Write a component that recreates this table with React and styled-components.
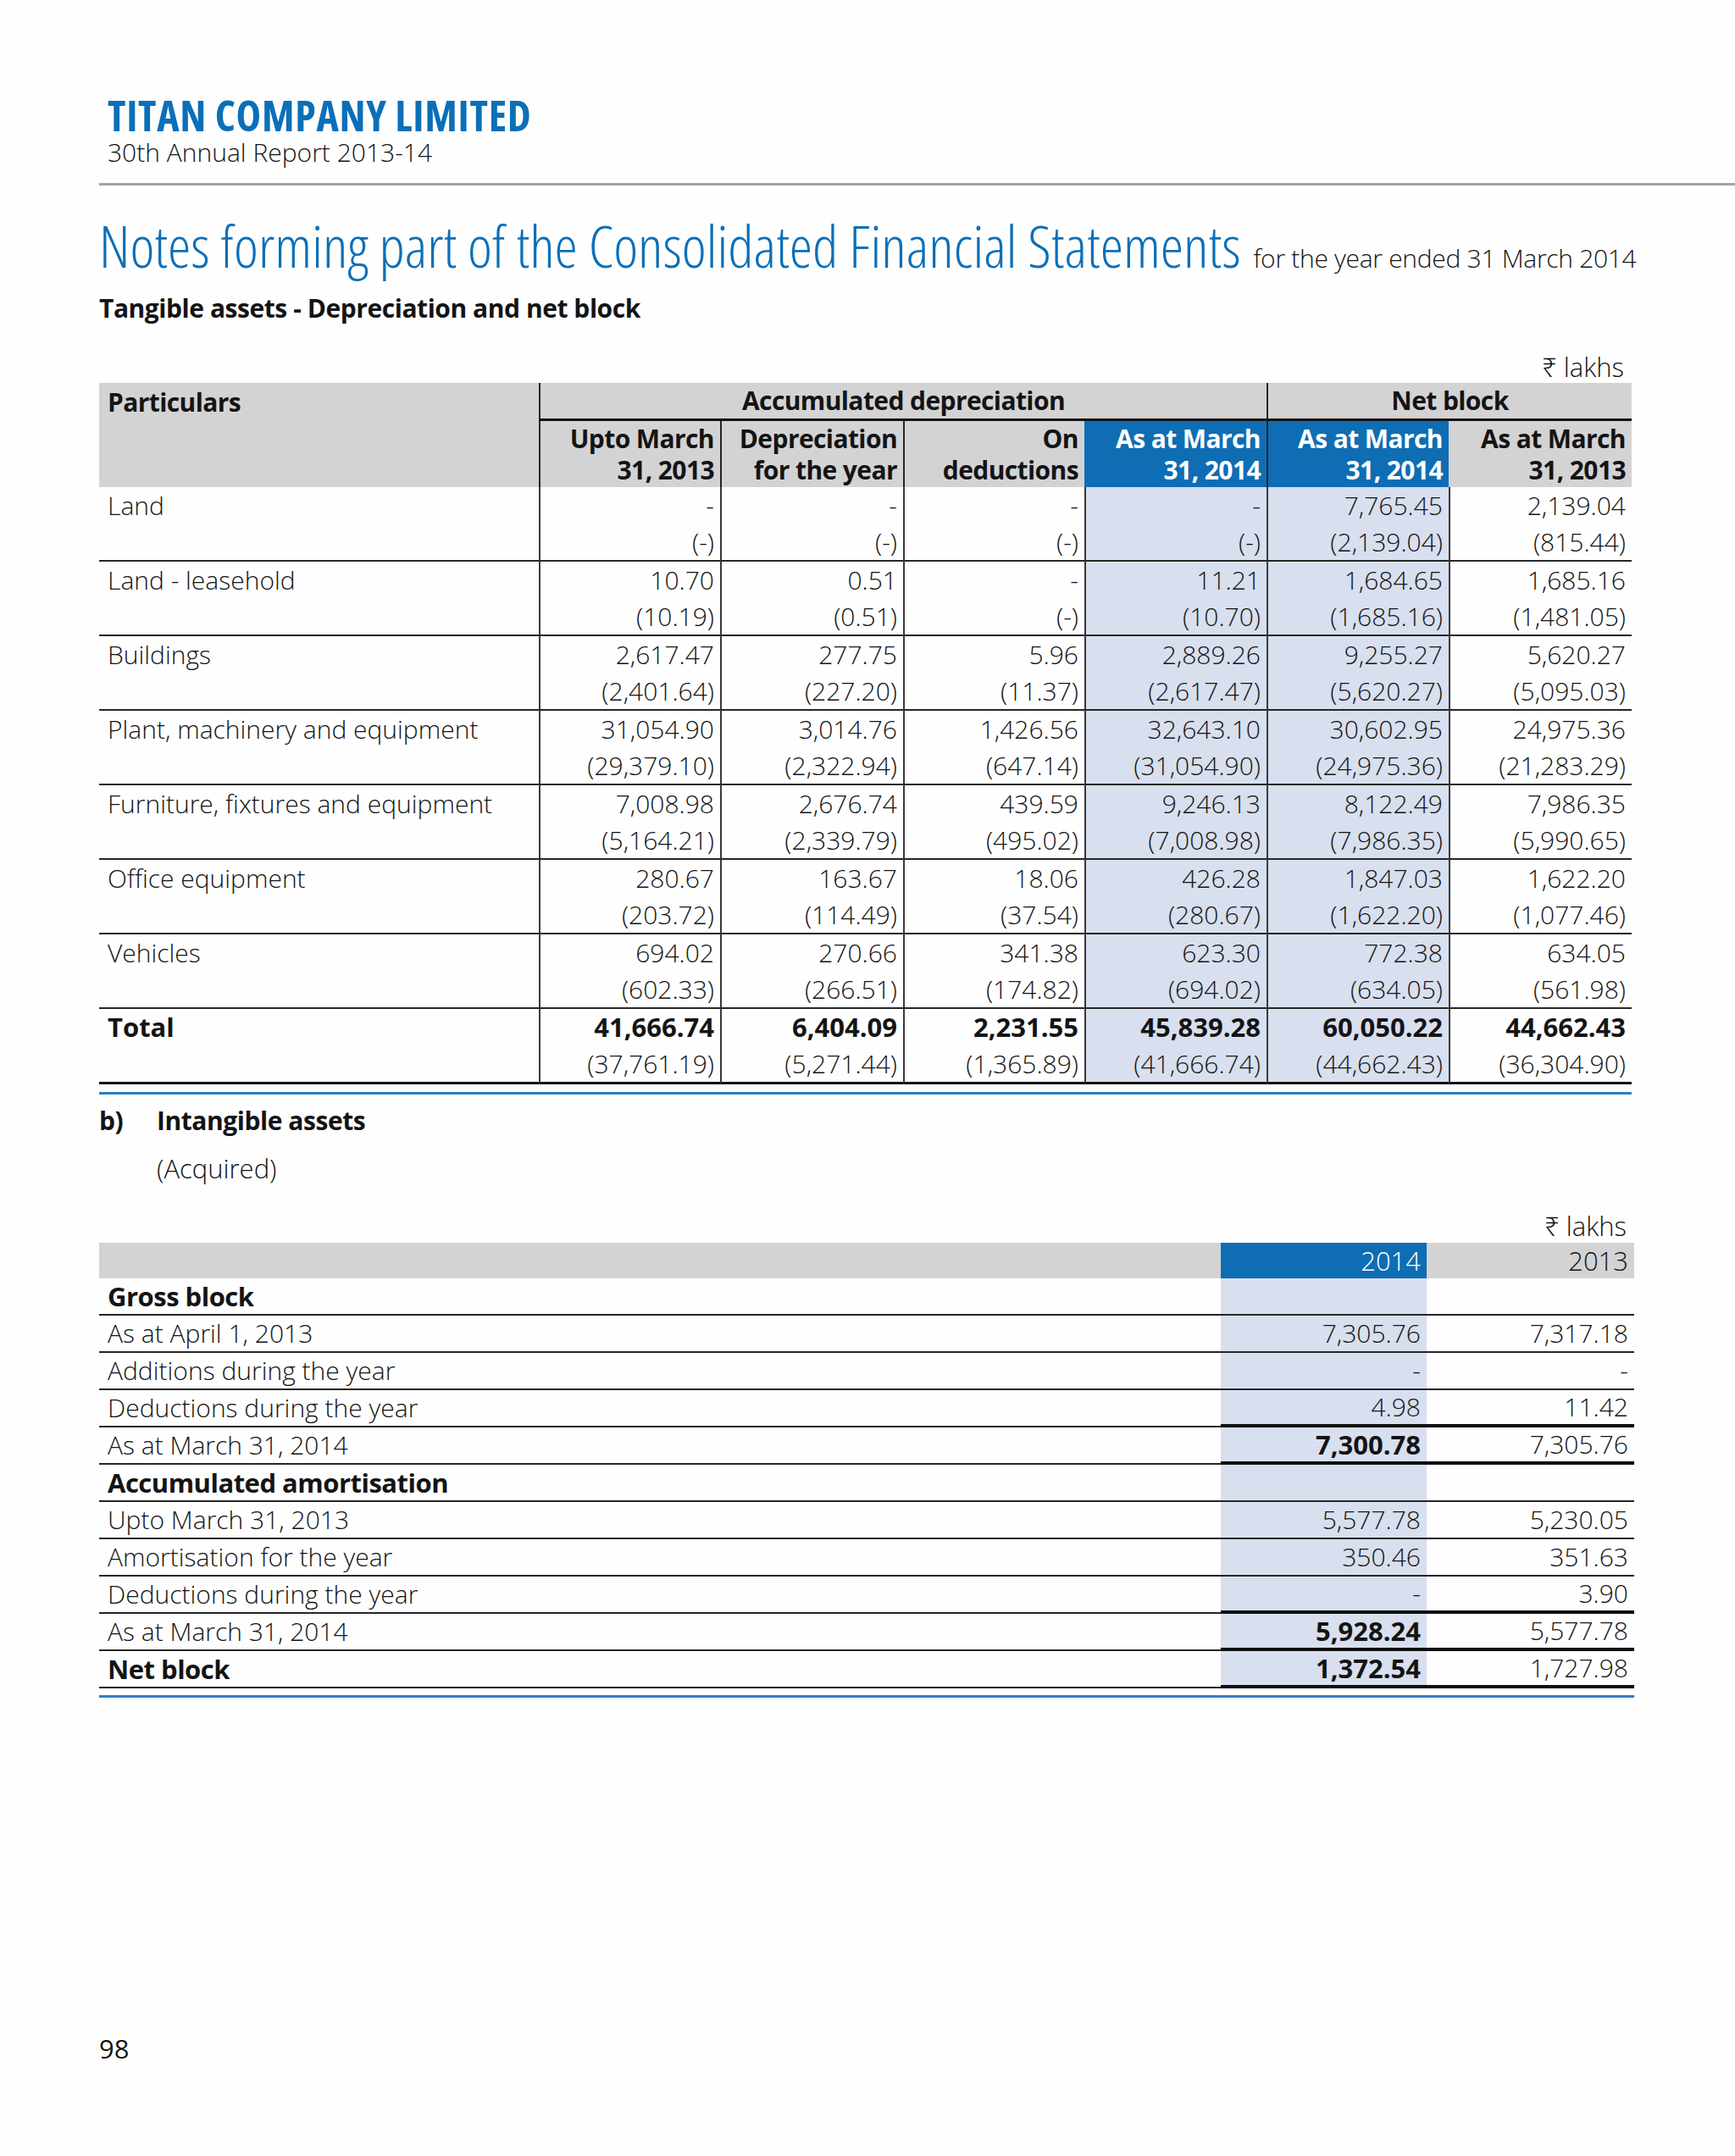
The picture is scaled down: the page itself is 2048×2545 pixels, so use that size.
import React from "react";
import styled, { createGlobalStyle, css } from "styled-components";

const BLUE = "#0b6fb8";
const CELL_BLUE = "#0f6db4";
const LIGHT_BLUE = "#d8dfee";
const GRAY = "#d3d3d4";
const INK = "#141414";
const LINE = "#262626";
const COND = "75%";

const GlobalStyle = createGlobalStyle`
  html, body { margin: 0; padding: 0; background: #fefefe; }
  body {
    font-family: "Open Sans", "Noto Sans", sans-serif;
    font-stretch: 100%;
    color: ${INK};
  }
`;

const Page = styled.div`
  width: 2048px;
  min-height: 2545px;
  box-sizing: border-box;
  padding-top: 110px;
  display: flex;
  flex-direction: column;
`;

/* ---------- Masthead ---------- */
const Masthead = styled.header`
  padding-left: 127px;
`;
const Company = styled.div`
  font-size: 50px;
  line-height: 52px;
  font-weight: 700;
  font-stretch: ${COND};
  letter-spacing: 0.7px;
  color: ${BLUE};
`;
const Edition = styled.div`
  margin-top: 2px;
  font-size: 30px;
  line-height: 32px;
  font-weight: 300;
`;
const Rule = styled.div`
  margin: 20px 0 0 117px;
  height: 3px;
  background: #a3a3a3;
`;

/* ---------- Content ---------- */
const Content = styled.main`
  padding-left: 117px;
  width: 1812px;
  display: flex;
  flex-direction: column;
`;
const TitleRow = styled.div`
  margin-top: 36px;
  display: flex;
  align-items: baseline;
  gap: 15px;
  white-space: nowrap;
`;
const Title = styled.h1`
  margin: 0;
  font-size: 69px;
  line-height: 1;
  font-weight: 300;
  font-stretch: ${COND};
  color: ${BLUE};
`;
const TitleNote = styled.span`
  font-size: 30px;
  font-weight: 300;
  letter-spacing: -0.3px;
`;
const SectionHead = styled.h2`
  margin: ${(p) => p.$top}px 0 0;
  display: flex;
  gap: ${(p) => (p.$label ? 30 : 0)}px;
  font-size: 30px;
  line-height: 38px;
  font-weight: 700;
  letter-spacing: -0.45px;
`;
const Marker = styled.span`
  width: 38px;
`;
const SubNote = styled.div`
  margin: 19px 0 0 68px;
  font-size: 31px;
  line-height: 1.2;
  font-weight: 300;
`;
const Unit = styled.div`
  margin-top: ${(p) => p.$top}px;
  width: ${(p) => p.$width}px;
  padding-right: ${(p) => p.$pad}px;
  box-sizing: border-box;
  text-align: right;
  font-size: 31px;
  line-height: 1.2;
  font-weight: 300;
`;

/* ---------- Depreciation table ---------- */
const DepGrid = styled.div`
  display: grid;
  grid-template-columns: 519px 214px 216px 214px 215px 215px 216px;
  width: 1809px;
`;

const Head = styled.div`
  box-sizing: border-box;
  background: ${(p) => (p.$blue ? CELL_BLUE : GRAY)};
  color: ${(p) => (p.$blue ? "#fff" : INK)};
  font-size: 30px;
  font-weight: 700;
  letter-spacing: -0.6px;
  ${(p) => p.$left && css`border-left: 2px solid ${LINE};`}
`;
const TopHead = styled(Head)`
  grid-column: ${(p) => p.$col};
  height: 45px;
  line-height: 42px;
  text-align: center;
  border-bottom: 3px solid #111;
`;
const ParticularsHead = styled(Head)`
  grid-row: 1 / span 2;
  padding-left: 10px;
  line-height: 45px;
`;
const SubHead = styled(Head)`
  height: 78px;
  padding: 2px 7px 0 0;
  text-align: right;
  line-height: 37px;
`;

const Cell = styled.div`
  box-sizing: border-box;
  height: ${(p) => (p.$first ? 86 : p.$last ? 91 : 88)}px;
  display: flex;
  flex-direction: column;
  align-items: ${(p) => (p.$label ? "flex-start" : "flex-end")};
  padding: 0 ${(p) => (p.$label ? "0 0 10px" : "7px 0 0")};
  font-size: 30px;
  line-height: 43px;
  font-weight: 300;
  background: ${(p) => (p.$tint ? LIGHT_BLUE : "transparent")};
  border-top: ${(p) => (p.$first ? "none" : `2px solid ${LINE}`)};
  border-bottom: ${(p) => (p.$last ? "3px solid #111" : "none")};
  border-left: ${(p) => (p.$label ? "none" : `2px solid #3a3a3a`)};
`;
const Strong = styled.span`
  font-weight: ${(p) => (p.$bold ? 700 : 300)};
  font-size: ${(p) => (p.$bold ? 31 : 30)}px;
`;

const BlueRule = styled.div`
  margin-top: ${(p) => p.$top}px;
  width: ${(p) => p.$width}px;
  height: 3px;
  background: #2e7fc1;
`;

/* ---------- Intangible table ---------- */
const AmortGrid = styled.div`
  display: grid;
  grid-template-columns: 1324px 243px 245px;
  width: 1812px;
`;
const YearHead = styled.div`
  box-sizing: border-box;
  height: 42px;
  line-height: 42px;
  padding-right: 7px;
  text-align: right;
  background: ${(p) => (p.$blue ? CELL_BLUE : GRAY)};
  color: ${(p) => (p.$blue ? "#fff" : INK)};
  font-size: 31px;
  font-weight: 300;
`;
const Line = styled.div`
  box-sizing: border-box;
  height: 44px;
  display: flex;
  align-items: center;
  justify-content: ${(p) => (p.$label ? "flex-start" : "flex-end")};
  padding: ${(p) => (p.$label ? "0 0 0 10px" : "0 7px 0 0")};
  background: ${(p) => (p.$tint ? LIGHT_BLUE : "transparent")};
  border-bottom: ${(p) => (p.$heavy && !p.$label ? "4px solid #0e0e0e" : `2px solid ${LINE}`)};
  font-size: ${(p) => (p.$bold ? 31 : 30)}px;
  font-weight: ${(p) => (p.$bold ? 700 : 300)};
  letter-spacing: ${(p) => (p.$bold && p.$label ? "-0.5px" : "0")};
  white-space: nowrap;
`;

const Folio = styled.footer`
  margin-top: auto;
  padding: 0 0 108px 117px;
  font-size: 31px;
  line-height: 1.2;
  font-weight: 400;
`;

/* ---------- Data ---------- */
const assets = [
  ["Land", ["-", "-", "-", "-", "7,765.45", "2,139.04"], ["(-)", "(-)", "(-)", "(-)", "(2,139.04)", "(815.44)"]],
  ["Land - leasehold", ["10.70", "0.51", "-", "11.21", "1,684.65", "1,685.16"], ["(10.19)", "(0.51)", "(-)", "(10.70)", "(1,685.16)", "(1,481.05)"]],
  ["Buildings", ["2,617.47", "277.75", "5.96", "2,889.26", "9,255.27", "5,620.27"], ["(2,401.64)", "(227.20)", "(11.37)", "(2,617.47)", "(5,620.27)", "(5,095.03)"]],
  ["Plant, machinery and equipment", ["31,054.90", "3,014.76", "1,426.56", "32,643.10", "30,602.95", "24,975.36"], ["(29,379.10)", "(2,322.94)", "(647.14)", "(31,054.90)", "(24,975.36)", "(21,283.29)"]],
  ["Furniture, fixtures and equipment", ["7,008.98", "2,676.74", "439.59", "9,246.13", "8,122.49", "7,986.35"], ["(5,164.21)", "(2,339.79)", "(495.02)", "(7,008.98)", "(7,986.35)", "(5,990.65)"]],
  ["Office equipment", ["280.67", "163.67", "18.06", "426.28", "1,847.03", "1,622.20"], ["(203.72)", "(114.49)", "(37.54)", "(280.67)", "(1,622.20)", "(1,077.46)"]],
  ["Vehicles", ["694.02", "270.66", "341.38", "623.30", "772.38", "634.05"], ["(602.33)", "(266.51)", "(174.82)", "(694.02)", "(634.05)", "(561.98)"]],
  ["Total", ["41,666.74", "6,404.09", "2,231.55", "45,839.28", "60,050.22", "44,662.43"], ["(37,761.19)", "(5,271.44)", "(1,365.89)", "(41,666.74)", "(44,662.43)", "(36,304.90)"], true],
];

const subHeads = [
  ["Upto March", "31, 2013", false, true],
  ["Depreciation", "for the year", false, true],
  ["On", "deductions", false, true],
  ["As at March", "31, 2014", true, false],
  ["As at March", "31, 2014", true, true],
  ["As at March", "31, 2013", false, false],
];

const amort = [
  ["Gross block", "", "", { bold: true }],
  ["As at April 1, 2013", "7,305.76", "7,317.18", {}],
  ["Additions during the year", "-", "-", {}],
  ["Deductions during the year", "4.98", "11.42", { heavy: true }],
  ["As at March 31, 2014", "7,300.78", "7,305.76", { heavy: true, boldNow: true }],
  ["Accumulated amortisation", "", "", { bold: true }],
  ["Upto March 31, 2013", "5,577.78", "5,230.05", {}],
  ["Amortisation for the year", "350.46", "351.63", {}],
  ["Deductions during the year", "-", "3.90", { heavy: true }],
  ["As at March 31, 2014", "5,928.24", "5,577.78", { heavy: true, boldNow: true }],
  ["Net block", "1,372.54", "1,727.98", { heavy: true, bold: true, boldNow: true }],
];

export default function App() {
  return (
    <Page>
      <GlobalStyle />
      <Masthead>
        <Company>TITAN COMPANY LIMITED</Company>
        <Edition>30th Annual Report 2013-14</Edition>
      </Masthead>
      <Rule />

      <Content>
        <TitleRow>
          <Title>Notes forming part of the Consolidated Financial Statements</Title>
          <TitleNote>for the year ended 31 March 2014</TitleNote>
        </TitleRow>

        <SectionHead $top={20}>Tangible assets - Depreciation and net block</SectionHead>

        <Unit $top={32} $width={1809} $pad={9}>₹ lakhs</Unit>

        <DepGrid>
          <ParticularsHead>Particulars</ParticularsHead>
          <TopHead $col="2 / span 4" $left>Accumulated depreciation</TopHead>
          <TopHead $col="6 / span 2" $left>Net block</TopHead>
          {subHeads.map(([a, b, blue, left], i) => (
            <SubHead key={i} $blue={blue} $left={left}>
              {a}
              <br />
              {b}
            </SubHead>
          ))}

          {assets.map(([name, now, prev, total], g) => {
            const first = g === 0;
            const last = g === assets.length - 1;
            return (
              <React.Fragment key={name}>
                <Cell $label $first={first} $last={last}>
                  <Strong $bold={total}>{name}</Strong>
                </Cell>
                {now.map((v, i) => (
                  <Cell key={i} $first={first} $last={last} $tint={i === 3 || i === 4}>
                    <Strong $bold={total}>{v}</Strong>
                    <span>{prev[i]}</span>
                  </Cell>
                ))}
              </React.Fragment>
            );
          })}
        </DepGrid>
        <BlueRule $top={9} $width={1809} />

        <SectionHead $top={12} $label>
          <Marker>b)</Marker>
          <span>Intangible assets</span>
        </SectionHead>
        <SubNote>(Acquired)</SubNote>

        <Unit $top={31} $width={1812} $pad={9}>₹ lakhs</Unit>

        <AmortGrid>
          <YearHead />
          <YearHead $blue>2014</YearHead>
          <YearHead>2013</YearHead>
          {amort.map(([label, now, prev, o], i) => (
            <React.Fragment key={i}>
              <Line $label $bold={o.bold}>{label}</Line>
              <Line $tint $heavy={o.heavy} $bold={o.boldNow}>{now}</Line>
              <Line $heavy={o.heavy}>{prev}</Line>
            </React.Fragment>
          ))}
        </AmortGrid>
        <BlueRule $top={8} $width={1812} />
      </Content>

      <Folio>98</Folio>
    </Page>
  );
}
